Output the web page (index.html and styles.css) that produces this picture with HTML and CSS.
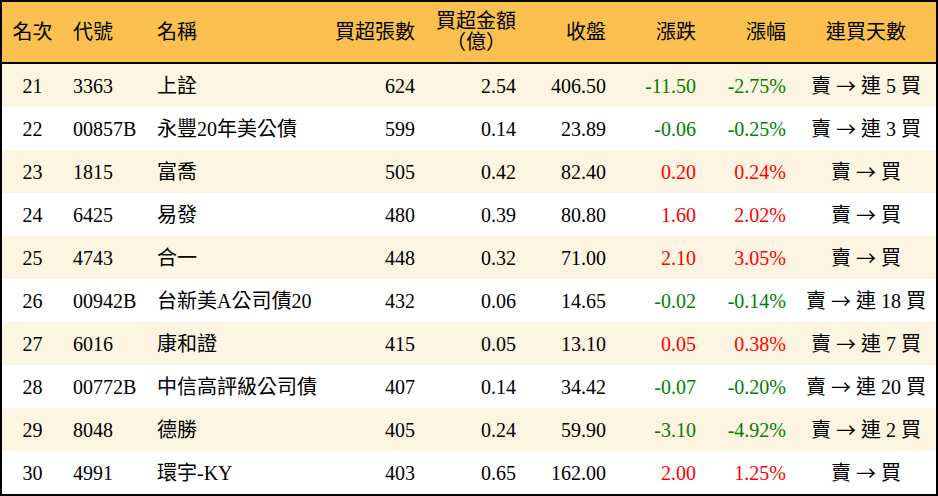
FILE: index.html
```html
<!DOCTYPE html>
<html lang="zh-Hant">
<head>
<meta charset="utf-8">
<title>買超排行</title>
<link rel="stylesheet" href="styles.css">
</head>
<body>
<div class="table">
  <div class="row head">
    <div class="c center">名次</div>
    <div class="c">代號</div>
    <div class="c">名稱</div>
    <div class="c right">買超張數</div>
    <div class="c right"><span class="two">買超金額<br>（億）</span></div>
    <div class="c right">收盤</div>
    <div class="c right">漲跌</div>
    <div class="c right">漲幅</div>
    <div class="c center">連買天數</div>
  </div>
  <div class="row alt">
    <div class="c center">21</div><div class="c">3363</div><div class="c">上詮</div>
    <div class="c right">624</div><div class="c right">2.54</div><div class="c right">406.50</div>
    <div class="c right down">-11.50</div><div class="c right down">-2.75%</div><div class="c center">賣 <span class="arr">→</span> 連 5 買</div>
  </div>
  <div class="row">
    <div class="c center">22</div><div class="c">00857B</div><div class="c">永豐20年美公債</div>
    <div class="c right">599</div><div class="c right">0.14</div><div class="c right">23.89</div>
    <div class="c right down">-0.06</div><div class="c right down">-0.25%</div><div class="c center">賣 <span class="arr">→</span> 連 3 買</div>
  </div>
  <div class="row alt">
    <div class="c center">23</div><div class="c">1815</div><div class="c">富喬</div>
    <div class="c right">505</div><div class="c right">0.42</div><div class="c right">82.40</div>
    <div class="c right up">0.20</div><div class="c right up">0.24%</div><div class="c center">賣 <span class="arr">→</span> 買</div>
  </div>
  <div class="row">
    <div class="c center">24</div><div class="c">6425</div><div class="c">易發</div>
    <div class="c right">480</div><div class="c right">0.39</div><div class="c right">80.80</div>
    <div class="c right up">1.60</div><div class="c right up">2.02%</div><div class="c center">賣 <span class="arr">→</span> 買</div>
  </div>
  <div class="row alt">
    <div class="c center">25</div><div class="c">4743</div><div class="c">合一</div>
    <div class="c right">448</div><div class="c right">0.32</div><div class="c right">71.00</div>
    <div class="c right up">2.10</div><div class="c right up">3.05%</div><div class="c center">賣 <span class="arr">→</span> 買</div>
  </div>
  <div class="row">
    <div class="c center">26</div><div class="c">00942B</div><div class="c">台新美A公司債20</div>
    <div class="c right">432</div><div class="c right">0.06</div><div class="c right">14.65</div>
    <div class="c right down">-0.02</div><div class="c right down">-0.14%</div><div class="c center">賣 <span class="arr">→</span> 連 18 買</div>
  </div>
  <div class="row alt">
    <div class="c center">27</div><div class="c">6016</div><div class="c">康和證</div>
    <div class="c right">415</div><div class="c right">0.05</div><div class="c right">13.10</div>
    <div class="c right up">0.05</div><div class="c right up">0.38%</div><div class="c center">賣 <span class="arr">→</span> 連 7 買</div>
  </div>
  <div class="row">
    <div class="c center">28</div><div class="c">00772B</div><div class="c">中信高評級公司債</div>
    <div class="c right">407</div><div class="c right">0.14</div><div class="c right">34.42</div>
    <div class="c right down">-0.07</div><div class="c right down">-0.20%</div><div class="c center">賣 <span class="arr">→</span> 連 20 買</div>
  </div>
  <div class="row alt">
    <div class="c center">29</div><div class="c">8048</div><div class="c">德勝</div>
    <div class="c right">405</div><div class="c right">0.24</div><div class="c right">59.90</div>
    <div class="c right down">-3.10</div><div class="c right down">-4.92%</div><div class="c center">賣 <span class="arr">→</span> 連 2 買</div>
  </div>
  <div class="row">
    <div class="c center">30</div><div class="c">4991</div><div class="c">環宇-KY</div>
    <div class="c right">403</div><div class="c right">0.65</div><div class="c right">162.00</div>
    <div class="c right up">2.00</div><div class="c right up">1.25%</div><div class="c center">賣 <span class="arr">→</span> 買</div>
  </div>
</div>
</body>
</html>
```
FILE: styles.css
```css
html, body {
  margin: 0;
  padding: 0;
  background: #fff;
}
body {
  font-family: "Liberation Serif", "Noto Sans CJK TC", serif;
  font-size: 20px;
  color: #000;
  text-spacing-trim: space-all;
}
.table {
  width: 938px;
  height: 496px;
  box-sizing: border-box;
  border: 2px solid #000;
  background: #fff;
}
.row {
  display: grid;
  grid-template-columns: 61px 84px 188px 90px 101px 90px 90px 90px 140px;
  height: 43px;
}
.row.head {
  height: 60px;
  background: #f9c04f;
  border-bottom: 2px solid #000;
}
.row.alt {
  background: #fdf5e1;
}
.c {
  display: flex;
  align-items: center;
  padding: 0 10px;
  white-space: pre;
  line-height: 1;
}
.right { justify-content: flex-end; }
.center { justify-content: center; }
.two {
  display: inline-block;
  text-align: center;
  line-height: 21px;
}
.arr {
  font-family: "Noto Sans CJK TC", sans-serif;
}
.down { color: #008000; }
.up { color: #ff0000; }
```
